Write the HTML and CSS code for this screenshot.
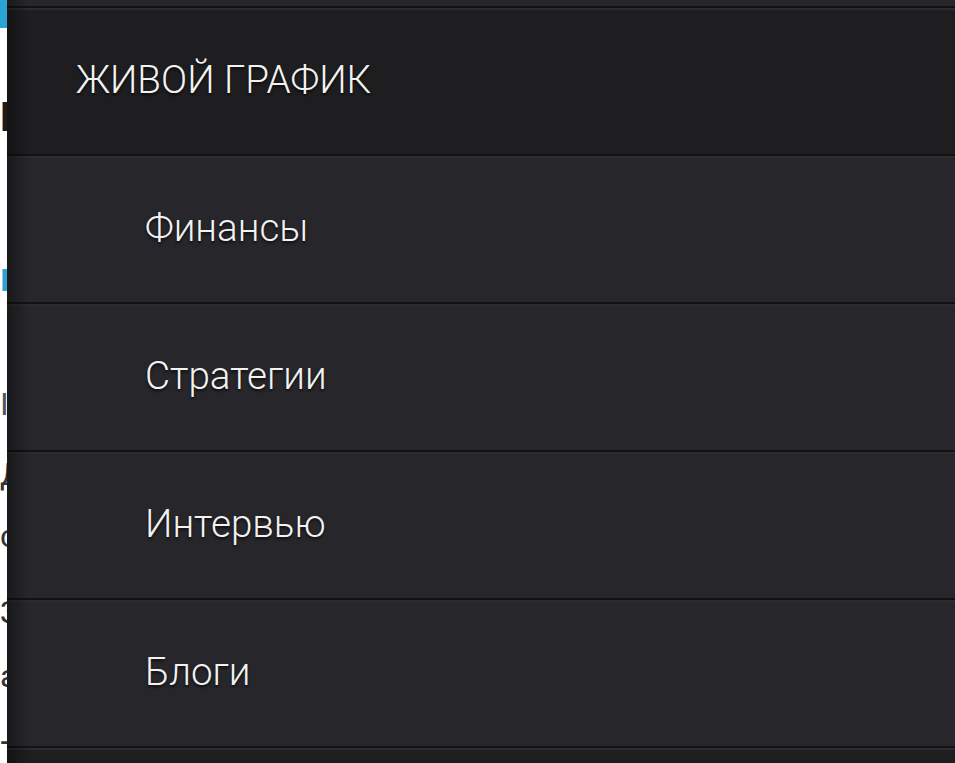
FILE: index.html
```html
<!DOCTYPE html>
<html lang="ru">
<head>
<meta charset="utf-8">
<title>Меню</title>
<link rel="stylesheet" href="styles.css">
</head>
<body>
<div class="page">
  <div class="topbar"></div>
  <div class="pline big">Нефть</div>
  <div class="pline link">I</div>
  <div class="pline grey">I</div>
  <div class="pline l4">Дальше</div>
  <div class="pline l5">сегодня</div>
  <div class="pline l6">Зона</div>
  <div class="pline l7">акции</div>
  <div class="pline l8">+</div>
</div>
<nav class="drawer">
  <div class="row item stub"></div>
  <div class="row header"><span class="label">ЖИВОЙ ГРАФИК</span></div>
  <div class="row item"><span class="label sub">Финансы</span></div>
  <div class="row item"><span class="label sub">Стратегии</span></div>
  <div class="row item"><span class="label sub">Интервью</span></div>
  <div class="row item"><span class="label sub">Блоги</span></div>
  <div class="row header"></div>
</nav>
</body>
</html>
```

FILE: styles.css
```css
html, body {
  margin: 0;
  padding: 0;
  background: #ffffff;
  overflow: hidden;
  height: 100%;
}

.page {
  font-family: Roboto, "Liberation Sans", sans-serif;
  color: #222;
}

.topbar {
  height: 28px;
  background: #2aa4d5;
}

.pline {
  font-size: 32px;
  line-height: 36px;
  white-space: nowrap;
  color: #333;
}
.big { font-weight: 700; font-size: 40px; margin-top: 72px; color: #1a1a1a; }
.link { color: #2aa4d5; margin-top: 126px; font-weight: 700; }
.grey { color: #555; margin-top: 88px; }
.l4 { margin-top: 34px; }
.l5 { margin-top: 26px; }
.l6 { margin-top: 40px; }
.l7 { margin-top: 28px; }
.l8 { margin-top: 34px; line-height: 28px; }

.drawer {
  position: fixed;
  top: 0;
  left: 7px;
  right: 0;
  bottom: 0;
  overflow: hidden;
  background: #1e1e20;
  display: flex;
  flex-direction: column;
  font-family: Roboto, "Liberation Sans", sans-serif;
}

.drawer::before {
  content: "";
  position: absolute;
  top: 0;
  bottom: 0;
  left: 0;
  width: 22px;
  background: linear-gradient(to right, rgba(0, 0, 0, 0.38), rgba(0, 0, 0, 0));
  pointer-events: none;
  z-index: 2;
}

.row {
  flex: 0 0 auto;
  height: 144px;
  border-top: 2px solid #121213;
  box-shadow: inset 0 2px 0 #2c2c2e;
  padding-top: 2px;
  display: flex;
  align-items: center;
}

.row.stub {
  height: 6px;
  border-top: none;
  box-shadow: none;
  padding-top: 0;
}

.header {
  background: #1e1e20;
  padding-left: 69px;
}

.item {
  background: #27262b;
  padding-left: 138px;
}

.label {
  font-size: 38.6px;
  font-weight: 300;
  line-height: 48px;
  color: #f2f2f2;
  text-shadow: 0 2px 3px rgba(0, 0, 0, 0.7);
  white-space: nowrap;
  position: relative;
  top: -2px;
}
```
